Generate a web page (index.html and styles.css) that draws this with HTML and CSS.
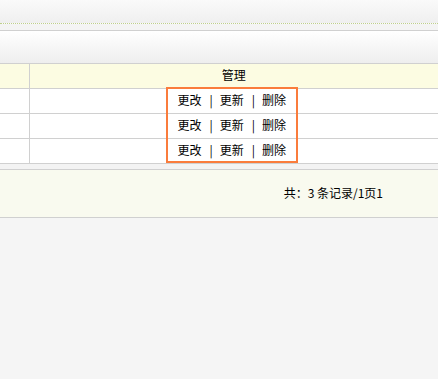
FILE: index.html
```html
<!DOCTYPE html>
<html lang="zh-CN">
<head>
  <meta charset="UTF-8">
  <meta name="viewport" content="width=device-width, initial-scale=1.0">
  <title>管理</title>
  <link rel="stylesheet" href="styles.css">
</head>
<body>
  <div class="topbar"></div>
  <div class="strip"></div>
  <div class="toolbar"></div>

  <div class="grid-wrap">
    <table class="grid">
      <tr class="head">
        <th class="chk"></th>
        <th>管理</th>
      </tr>
      <tr>
        <td class="chk"></td>
        <td class="ops"><a href="#">更改</a><span class="sep">|</span><a href="#">更新</a><span class="sep">|</span><a href="#">删除</a></td>
      </tr>
      <tr>
        <td class="chk"></td>
        <td class="ops"><a href="#">更改</a><span class="sep">|</span><a href="#">更新</a><span class="sep">|</span><a href="#">删除</a></td>
      </tr>
      <tr>
        <td class="chk"></td>
        <td class="ops"><a href="#">更改</a><span class="sep">|</span><a href="#">更新</a><span class="sep">|</span><a href="#">删除</a></td>
      </tr>
    </table>
    <!-- 标注框 -->
    <div class="mark"></div>
  </div>

  <div class="gap"></div>
  <div class="pager">共：3 条记录/1页1</div>
</body>
</html>
```

FILE: styles.css
```css
*{margin: 0;padding: 0;box-sizing: border-box;}
body{background: #f5f5f5;font: 12px/1 "Noto Sans CJK SC", "Liberation Sans", sans-serif;color: #000;}
a{color: #000;text-decoration: none;}

.topbar{height: 24px;background: linear-gradient(#fafafa, #efefef);border-bottom: 1px dotted #bfd08c;}
.strip{height: 7px;background: #f4f4f4;border-bottom: 1px solid #d0d0d0;}
.toolbar{height: 32px;background: linear-gradient(#ffffff, #eeeeee);}

.grid-wrap{position: relative;}
.grid{width: 100%;border-collapse: collapse;background: #fff;}
.grid th, .grid td{height: 25px;padding-bottom: 2px;border-top: 1px solid #d0d0d0;border-bottom: 1px solid #d0d0d0;text-align: center;font-weight: normal;vertical-align: middle;}
.grid .chk{width: 29px;border-right: 1px solid #d0d0d0;}
.grid .head th{background: #fcfce2;}
.ops{padding-right: 4px;}
.ops .sep{margin: 0 7px 0 8px;}

.mark{position: absolute;left: 166px;top: 24px;width: 132px;height: 76px;border: 2px solid #fa7c3c;}

.gap{height: 6px;background: #f3f3f3;border-bottom: 1px solid #d0d0d0;}
.pager{height: 48px;padding-bottom: 1px;background: #f9faef;border-bottom: 1px solid #d0d0d0;display: flex;align-items: center;justify-content: flex-end;padding-right: 55px;}
```
